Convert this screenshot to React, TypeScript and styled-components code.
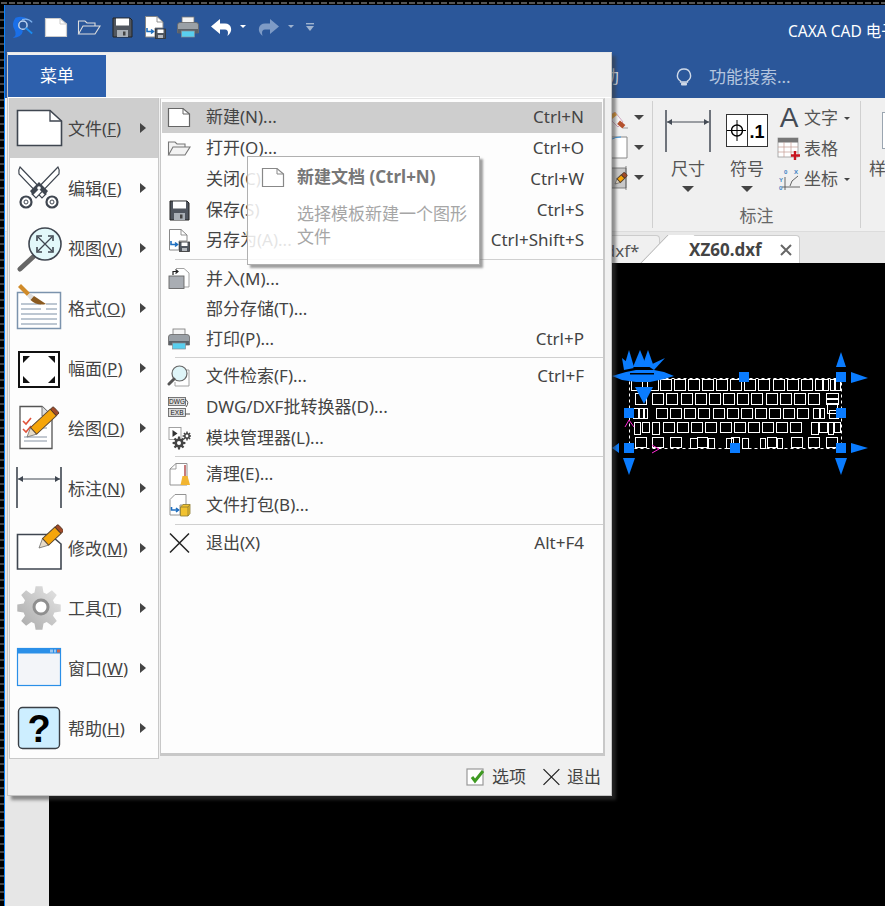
import React from 'react'
import styled, { createGlobalStyle } from 'styled-components'

const FONT = '"Noto Sans", "Noto Sans CJK SC", sans-serif'

const GlobalStyle = createGlobalStyle`
  html, body { margin: 0; padding: 0; background: #000; }
  * { box-sizing: border-box; }
`

const Root = styled.div`
  position: relative;
  width: 885px;
  height: 906px;
  overflow: hidden;
  background: #000;
  font-family: ${FONT};
  font-size: 17px;
  line-height: 20px;
  color: #444;
  display: flex;
  flex-direction: column;
`
const TopEdge = styled.div`
  height: 5px;
  flex: none;
  background:
    repeating-linear-gradient(90deg, #000 0 1px, #555 1px 7px, #000 7px 8px) 0 2px / 100% 2px no-repeat,
    #000;
`
const Frame = styled.div`
  flex: 1;
  display: flex;
  min-height: 0;
`
const LeftEdge = styled.div`
  width: 5px;
  flex: none;
  border-right: 1px solid #0a84ff;
  background: repeating-linear-gradient(180deg, #000 0 6px, #444 6px 8px);
`
const Main = styled.div`
  flex: 1;
  min-width: 0;
  display: flex;
  flex-direction: column;
`
const TitleBar = styled.div`
  height: 47px;
  flex: none;
  display: flex;
  align-items: center;
  background: #2b579a;
  padding-left: 5px;
`
const QuickBar = styled.div`
  display: flex;
  align-items: center;
  width: 778px;
  flex: none;
  margin-bottom: 4px;
`
const QuickButton = styled.div<{ $w: number; $gap?: number }>`
  width: ${p => p.$w}px;
  margin-left: ${p => p.$gap ?? 0}px;
  height: 26px;
  flex: none;
  display: flex;
  align-items: center;
  justify-content: center;
`
const Title = styled.div`
  color: #fff;
  white-space: nowrap;
  font-size: 15.5px;
  margin-top: 4px;
`
const TabBar = styled.div`
  height: 46px;
  flex: none;
  display: flex;
  align-items: center;
  background: #2b579a;
  padding: 4px 0 0 566px;
  color: #dfe7f2;
`
const RibbonTab = styled.div`
  width: 62px;
  text-align: center;
  margin-right: 41px;
`
const SearchHint = styled.div`
  display: flex;
  align-items: center;
  gap: 15px;
  color: #b4c5de;
`
const Ribbon = styled.div`
  height: 134px;
  flex: none;
  display: flex;
  padding: 3px 0 3px 590px;
  background: #f0f0f0;
  border-bottom: 1px solid #dcdcdc;
`
const RibbonGroup = styled.div<{ $w: number }>`
  width: ${p => p.$w}px;
  flex: none;
  display: flex;
  flex-direction: column;
  border-right: 1px solid #d0d0d0;
`
const GroupBody = styled.div`
  flex: 1;
  display: flex;
`
const StyleBody = styled(GroupBody)`
  padding: 11px 0 0 17px;
`
const GroupLabel = styled.div`
  height: 24px;
  text-align: center;
  color: #666;
  line-height: 24px;
`
const LargeButton = styled.div<{ $w: number }>`
  width: ${p => p.$w}px;
  flex: none;
  display: flex;
  flex-direction: column;
  align-items: center;
  color: #555;
`
const LargeIcon = styled.div`
  height: 52px;
  margin-top: 5px;
  padding-bottom: 3px;
  display: flex;
  align-items: center;
  justify-content: center;
`
const LargeLabel = styled.div`
  line-height: 22px;
`
const CaretDown = styled.span<{ $size: number }>`
  display: inline-block;
  width: 0;
  height: 0;
  border-left: ${p => p.$size}px solid transparent;
  border-right: ${p => p.$size}px solid transparent;
  border-top: ${p => p.$size}px solid ${p => p.color || '#444'};
`
const LargeCaret = styled(CaretDown)`
  margin-top: 6px;
`
const SmallColumn = styled.div`
  display: flex;
  flex-direction: column;
  padding: 2px 0 0 6px;
`
const SmallRow = styled.div`
  height: 30.5px;
  display: flex;
  align-items: center;
  gap: 2px;
  color: #555;
`
const SmallIcon = styled.div`
  width: 24px;
  height: 24px;
  flex: none;
`
const SmallText = styled.span`
  width: 38px;
  margin-left: 1px;
`
const DocTabs = styled.div`
  height: 31px;
  flex: none;
  display: flex;
  align-items: flex-end;
  background: #e8e8e8;
  padding-left: 555px;
`
const DocTab = styled.div`
  width: 100px;
  height: 28px;
  flex: none;
  background: #f0f0f0;
  border: 1px solid #ccc;
  border-bottom: none;
  border-radius: 0 4px 0 0;
  line-height: 30px;
  text-align: right;
  padding-right: 23px;
  color: #555;
  overflow: hidden;
  white-space: nowrap;
`
const ActiveTab = styled.div`
  position: relative;
  width: 133px;
  height: 28px;
  flex: none;
  margin-left: 7px;
  background: #fff;
  border-top: 1px solid #ccc;
  border-right: 1px solid #ccc;
  border-radius: 0 4px 0 0;
  display: flex;
  align-items: center;
  padding-left: 22px;
  gap: 18px;
  font-weight: 700;
  color: #444;
  &::before {
    content: '';
    position: absolute;
    left: -13px;
    top: -1px;
    width: 26px;
    height: 28px;
    background: #fff;
    border-left: 1px solid #aaa;
    transform: skewX(-44deg);
  }
`
const TabName = styled.span`
  position: relative;
`
const Workspace = styled.div`
  flex: 1;
  min-height: 0;
  display: flex;
`
const Rail = styled.div`
  width: 44px;
  flex: none;
  background: #e6e6e6;
`
const Canvas = styled.svg`
  flex: 1;
  min-width: 0;
  height: 100%;
  display: block;
  background: #000;
`

/* file menu overlay */
const Menu = styled.div`
  position: absolute;
  left: 7px;
  top: 52px;
  width: 605px;
  height: 744px;
  display: flex;
  flex-direction: column;
  background: #f0f0f0;
  border: 1px solid #c4c4c4;
  border-top-color: #e8e8e8;
  box-shadow: 4px 4px 3px rgba(60, 60, 60, 0.55);
`
const MenuHead = styled.div`
  height: 44px;
  flex: none;
  padding-top: 2px;
`
const MenuTab = styled.div`
  width: 98px;
  height: 42px;
  background: #2d60ad;
  color: #fff;
  display: flex;
  align-items: center;
  justify-content: center;
`
const MenuBody = styled.div`
  height: 662px;
  flex: none;
  display: flex;
  align-items: flex-start;
  border-top: 1px solid #fff;
  padding-left: 1px;
`
const NavPanel = styled.div`
  width: 150px;
  height: 661px;
  flex: none;
  background: #fdfdfd;
  border: 1px solid #c8c8c8;
  border-top: none;
`
const NavItem = styled.div<{ $active?: boolean }>`
  height: 60px;
  display: flex;
  align-items: center;
  padding-left: 5px;
  background: ${p => (p.$active ? '#cecece' : 'transparent')};
`
const NavIcon = styled.div`
  width: 48px;
  height: 48px;
  flex: none;
`
const NavText = styled.div`
  width: 72px;
  margin-left: 5px;
  padding-top: 2px;
  white-space: nowrap;
`
const Accel = styled.span`
  text-decoration: underline;
`
const NavArrow = styled.div`
  width: 0;
  height: 0;
  border-top: 5px solid transparent;
  border-bottom: 5px solid transparent;
  border-left: 6px solid #444;
`
const ListPanel = styled.div`
  width: 445px;
  height: 658px;
  flex: none;
  margin-left: 1px;
  background: #fdfdfd;
  border: 1px solid #c8c8c8;
  border-top: 1px solid #e4e4e4;
  border-right-width: 2px;
  border-bottom-width: 3px;
  padding: 3px 0 0 1px;
`
const ListRow = styled.div<{ $h: number; $active?: boolean }>`
  height: ${p => p.$h}px;
  display: flex;
  align-items: center;
  padding: 0 18px 0 5px;
  margin-right: 1px;
  background: ${p => (p.$active ? '#cecece' : 'transparent')};
  white-space: nowrap;
`
const ListIcon = styled.div`
  width: 24px;
  height: 24px;
  flex: none;
  margin-right: 15px;
`
const ListLabel = styled.div`
  flex: 1;
`
const Rule = styled.div<{ $gap: number }>`
  height: 1px;
  margin: ${p => p.$gap}px 0 ${p => p.$gap}px 13px;
  background: #d0d0d0;
`
const MenuFoot = styled.div`
  flex: 1;
  display: flex;
  align-items: center;
  justify-content: flex-end;
  padding-right: 10px;
  gap: 15px;
`
const FootButton = styled.div`
  display: flex;
  align-items: center;
  gap: 6px;
`
const Tip = styled.div`
  position: absolute;
  left: 239px;
  top: 103px;
  width: 233px;
  height: 109px;
  padding: 8px 10px 0 13px;
  background: rgba(255, 255, 255, 0.86);
  border: 1px solid #b0b0b0;
  box-shadow: 3px 3px 2px rgba(120, 120, 120, 0.7);
`
const TipHead = styled.div`
  display: flex;
  align-items: center;
  gap: 12px;
  font-weight: 700;
  color: #777;
`
const TipBody = styled.div`
  margin: 13px 0 0 36px;
  color: #a6a6a6;
  line-height: 23px;
`

/* drawings */
const Svg: React.FC<{ s?: number; w?: number; h?: number; box?: string; children: React.ReactNode }> = ({ s = 24, w, h, box, children }) => (
  <svg width={w ?? s} height={h ?? s} viewBox={box ?? `0 0 ${w ?? s} ${h ?? s}`} style={{ display: 'block' }}>{children}</svg>
)

const gearPath = (cx: number, cy: number, ro: number, ri: number, teeth: number) => {
  const pts: string[] = []
  const step = (Math.PI * 2) / teeth
  for (let i = 0; i < teeth; i++) {
    const a = i * step
    const offs: [number, number][] = [[-0.36, ri], [-0.2, ro], [0.2, ro], [0.36, ri]]
    offs.forEach(([o, r]) => {
      pts.push(`${(cx + Math.cos(a + o * step) * r).toFixed(1)},${(cy + Math.sin(a + o * step) * r).toFixed(1)}`)
    })
  }
  return pts.join(' ')
}

const Pencil: React.FC<{ x: number; y: number; len?: number; wd?: number }> = ({ x, y, len = 32, wd = 7 }) => (
  <g transform={`translate(${x} ${y}) rotate(-43)`}>
    <polygon points={`0,0 ${wd},${-wd / 2} ${wd},${wd / 2}`} fill="#e8dcc8" stroke="#666" strokeWidth="0.7" />
    <rect x={wd} y={-wd / 2} width={len - wd - 4} height={wd} fill="#f5a50a" stroke="#5a4632" strokeWidth="1" />
    <rect x={len - 4} y={-wd / 2} width="4" height={wd} rx="1.5" fill="#a04a28" stroke="#4a3020" strokeWidth="0.8" />
  </g>
)

const PageNew: React.FC<{ stroke?: string; fill?: string }> = ({ stroke = '#666', fill = '#fff' }) => (
  <Svg>
    <path d="M1.5 3.500H16L22.500 9V21.500H1.500Z" fill={fill} stroke={stroke} strokeWidth="1.2" />
    <path d="M16 3.500V9H22.500" fill="none" stroke={stroke} strokeWidth="1" />
  </Svg>
)
const FolderOpen: React.FC<{ stroke?: string; fill?: string }> = ({ stroke = '#777', fill = '#f3f3f3' }) => (
  <Svg>
    <path d="M1.5 19V6H8L10 8H18V11" fill={fill} stroke={stroke} strokeWidth="1.1" />
    <path d="M1.5 19L6 11H23L18 19Z" fill={fill} stroke={stroke} strokeWidth="1.1" />
  </Svg>
)
const Floppy: React.FC = () => (
  <Svg>
    <path d="M3 3H20L22 5V22H3Z" fill="#50565f" stroke="#222" strokeWidth="1" />
    <rect x="6" y="3.5" width="13" height="7" fill="#fff" />
    <rect x="7" y="15" width="11" height="7" fill="#aab0b7" />
    <rect x="13" y="16.5" width="2.5" height="4" fill="#444" />
  </Svg>
)
const SaveAs: React.FC = () => (
  <Svg>
    <path d="M2.5 1.5H14L20 7V13H12V22H2.5Z" fill="#fff" stroke="#888" strokeWidth="1" />
    <path d="M14 1.5V7H20" fill="none" stroke="#888" strokeWidth="0.9" />
    <path d="M4 13V16.5H10M8 14.5L10.5 16.5L8 18.5" fill="none" stroke="#1f6fc0" strokeWidth="1.6" />
    <rect x="12.5" y="14" width="10" height="9.5" fill="#50565f" stroke="#333" strokeWidth="0.8" />
    <rect x="14.5" y="14.5" width="6" height="3.5" fill="#fff" />
    <rect x="15" y="20" width="5" height="3" fill="#b5b9be" />
  </Svg>
)
const Printer: React.FC = () => (
  <Svg>
    <rect x="6" y="2" width="12" height="7" fill="#f4f4f4" stroke="#777" strokeWidth="0.8" />
    <path d="M1.5 10Q1.5 7.5 4 7.5H20Q22.5 7.5 22.5 10V18H1.5Z" fill="#9aa0a6" stroke="#666" strokeWidth="0.8" />
    <rect x="2" y="14" width="20" height="4" fill="#5b6168" />
    <rect x="5.5" y="16" width="13" height="6" fill="#59cfef" stroke="#8a8f95" strokeWidth="0.7" />
  </Svg>
)
const Merge: React.FC = () => (
  <Svg>
    <path d="M9 1.5H17L22 6V20H17" fill="#fff" stroke="#999" strokeWidth="0.9" />
    <rect x="2" y="9" width="15" height="12.5" fill="#a9adb3" stroke="#666" strokeWidth="0.9" />
    <path d="M6 8V4.5H10M8.5 2.5L11 4.5L8.5 6.5" fill="none" stroke="#222" strokeWidth="1.2" />
  </Svg>
)
const FindFile: React.FC = () => (
  <Svg>
    <path d="M12 6H22V22H8V18" fill="#fff" stroke="#999" strokeWidth="0.9" />
    <circle cx="12.5" cy="9.5" r="7.5" fill="#dff5f8" stroke="#666" strokeWidth="1.2" />
    <line x1="7" y1="15" x2="2" y2="20" stroke="#555" strokeWidth="3" strokeLinecap="round" />
  </Svg>
)
const Converter: React.FC = () => (
  <Svg>
    <rect x="1.5" y="2.5" width="17" height="8" fill="#ddd" stroke="#444" strokeWidth="0.7" />
    <rect x="1.5" y="13.5" width="17" height="8" fill="#ddd" stroke="#444" strokeWidth="0.7" />
    <text x="10" y="9" textAnchor="middle" fontSize="6.5" fontFamily="Liberation Sans" fill="#222">DWG</text>
    <text x="10" y="20" textAnchor="middle" fontSize="6.5" fontFamily="Liberation Sans" fill="#222">EXB</text>
    <path d="M18 4Q23 7 19 12M18 19H23" fill="none" stroke="#555" strokeWidth="1" />
  </Svg>
)
const Modules: React.FC = () => (
  <Svg>
    <rect x="2" y="1.5" width="12" height="12" fill="#fff" stroke="#999" strokeWidth="0.9" />
    <polygon points="5.5,4 10.5,7.5 5.5,11" fill="#333" />
    <polygon points={gearPath(12, 17, 6.5, 4.5, 8)} fill="#444" />
    <circle cx="12" cy="17" r="2" fill="#fff" />
    <polygon points={gearPath(20, 10, 4.5, 3, 8)} fill="#444" />
    <circle cx="20" cy="10" r="1.4" fill="#fff" />
  </Svg>
)
const Clean: React.FC = () => (
  <Svg>
    <path d="M3 7L9 1.5H20V23H3Z" fill="#fff" stroke="#888" strokeWidth="0.9" />
    <path d="M3 7H9V1.5" fill="none" stroke="#888" strokeWidth="0.8" />
    <line x1="18" y1="3" x2="18" y2="14" stroke="#a33" strokeWidth="1.3" />
    <path d="M15.5 14H20.5L23 23H13.5Z" fill="#f2b531" />
  </Svg>
)
const Pack: React.FC = () => (
  <Svg>
    <path d="M3 6.5L8 1.5H19V12H13V22H3Z" fill="#fff" stroke="#888" strokeWidth="0.9" />
    <path d="M4.5 14V17H11M9 15L11.5 17L9 19" fill="none" stroke="#1f6fc0" strokeWidth="1.6" />
    <path d="M13.5 14L16 11.5H23V20.5L21 23H13.5Z" fill="#f2c230" stroke="#8a7a30" strokeWidth="0.8" />
    <path d="M13.5 14H21V23M21 14L23 11.5" fill="none" stroke="#8a7a30" strokeWidth="0.8" />
  </Svg>
)
const Cross: React.FC<{ s?: number }> = ({ s = 24 }) => (
  <Svg s={s} box="0 0 24 24">
    <path d="M3 2.5L22 21.5M22 2.5L3 21.5" stroke="#222" strokeWidth="1.5" fill="none" />
  </Svg>
)

const NavFile = () => (
  <Svg s={48}>
    <path d="M2.5 6.5H35L46.5 17V41.5H2.5Z" fill="#fff" stroke="#3f4650" strokeWidth="1.6" />
    <path d="M35 6.5V17H46.5" fill="none" stroke="#3f4650" strokeWidth="1.3" />
  </Svg>
)
const NavCut = () => (
  <Svg s={48}>
    <path d="M5 3L31 30L27 34L4 10Q3 6 5 3Z" fill="#fff" stroke="#3f4650" strokeWidth="1.2" />
    <path d="M43 3L17 30L21 34L44 10Q45 6 43 3Z" fill="#fff" stroke="#3f4650" strokeWidth="1.2" />
    <path d="M15 27L24 18L33 27L30 31L24 25L18 31Z" fill="#3f4650" />
    <circle cx="11" cy="38" r="5.5" fill="#fff" stroke="#3f4650" strokeWidth="2.2" />
    <circle cx="37" cy="38" r="5.5" fill="#fff" stroke="#3f4650" strokeWidth="2.2" />
    <circle cx="11" cy="38" r="2" fill="none" stroke="#3f4650" />
    <circle cx="37" cy="38" r="2" fill="none" stroke="#3f4650" />
    <circle cx="24" cy="24" r="1.8" fill="#fff" />
  </Svg>
)
const NavView = () => (
  <Svg s={48}>
    <line x1="18" y1="33" x2="5" y2="45" stroke="#666" strokeWidth="5" strokeLinecap="round" />
    <circle cx="30" cy="20" r="16" fill="#e2f8fa" stroke="#3f4650" strokeWidth="1.6" />
    <path d="M23 13L37 27M37 13L23 27" stroke="#3f4650" strokeWidth="1.3" />
    <path d="M22 17V12H27M33 12H38V17M38 23V28H33M27 28H22V23" fill="none" stroke="#3f4650" strokeWidth="1.6" />
  </Svg>
)
const NavFormat = () => (
  <Svg s={48}>
    <rect x="2.5" y="8.5" width="43" height="36" fill="#fff" stroke="#7b93ad" strokeWidth="1.5" />
    <path d="M6 20H26M31 20H42M6 25H26M31 25H42M6 30H42M6 35H42M6 40H42" stroke="#a8b5c3" strokeWidth="1.3" />
    <path d="M3 3L6 0L15 9L12 12Z" fill="#d08b2a" />
    <path d="M12 12L15 9L19 12L15.5 16Z" fill="#ddd" />
    <path d="M15.5 16L19 12Q25 16 31 20Q22 22 15.5 16Z" fill="#8a5a20" />
  </Svg>
)
const NavPaper = () => (
  <Svg s={48}>
    <rect x="4" y="8" width="40" height="35" fill="#fff" stroke="#111" strokeWidth="2" />
    <polygon points="8,12 15,12 8,19" fill="#111" />
    <polygon points="40,12 33,12 40,19" fill="#111" />
    <polygon points="8,39 15,39 8,32" fill="#111" />
    <polygon points="40,39 33,39 40,32" fill="#111" />
  </Svg>
)
const NavDraw = () => (
  <Svg s={48}>
    <path d="M5 2.5H27L37 12V44.5H5Z" fill="#fff" stroke="#555" strokeWidth="1.3" />
    <path d="M27 2.5V12H37" fill="#ddd" stroke="#777" />
    <path d="M8 17L11 20L16 14M8 25L11 28L16 22" fill="none" stroke="#e0533a" strokeWidth="1.6" />
    <path d="M19 24H32M9 33H32M9 37H32" stroke="#b0b8c2" strokeWidth="1.3" />
    <Pencil x={12} y={33} len={40} wd={9} />
  </Svg>
)
const NavDim = () => (
  <Svg s={48}>
    <path d="M2 3V44M46 3V44" stroke="#3f4650" strokeWidth="1.6" />
    <path d="M3 15H45" stroke="#3f4650" strokeWidth="1.2" />
    <polygon points="3,15 8,12 8,18" fill="#3f4650" />
    <polygon points="45,15 40,12 40,18" fill="#3f4650" />
  </Svg>
)
const NavEdit = () => (
  <Svg s={48}>
    <path d="M2.5 10.5H35L46 20V45H2.5Z" fill="#fff" stroke="#3f4650" strokeWidth="1.6" />
    <Pencil x={24} y={24} len={30} wd={9} />
  </Svg>
)
const NavTool = () => (
  <Svg s={48}>
    <defs>
      <linearGradient id="gear" x1="1" y1="0" x2="0" y2="1">
        <stop offset="0" stopColor="#e6e6e6" />
        <stop offset="1" stopColor="#a8a8a8" />
      </linearGradient>
    </defs>
    <polygon points={gearPath(24, 24, 22, 16, 8)} fill="url(#gear)" />
    <circle cx="26" cy="23" r="7" fill="#fff" stroke="#8f8f8f" strokeWidth="3" />
  </Svg>
)
const NavWindow = () => (
  <Svg s={48}>
    <rect x="2.5" y="4.5" width="43" height="37" fill="#f3f5f9" stroke="#2a8fe8" strokeWidth="1.2" />
    <rect x="2.5" y="4.5" width="43" height="5" fill="#2a8fe8" />
    <rect x="35" y="5.5" width="3" height="3" fill="#9cc6ee" />
    <rect x="39" y="5.5" width="2" height="3" fill="#9cc6ee" />
    <rect x="42" y="5.5" width="3" height="3" fill="#d0664a" />
  </Svg>
)
const NavHelp = () => (
  <Svg s={48}>
    <rect x="3.5" y="3.5" width="41" height="41" rx="4" fill="#cdeeff" stroke="#3a3f45" strokeWidth="1.4" />
    <text x="24" y="38" textAnchor="middle" fontSize="38" fontWeight="700" fontFamily="Liberation Sans" fill="#000">?</text>
  </Svg>
)

const navItems: { label: string; key: string; icon: React.ReactNode }[] = [
  { label: '文件', key: 'F', icon: <NavFile /> },
  { label: '编辑', key: 'E', icon: <NavCut /> },
  { label: '视图', key: 'V', icon: <NavView /> },
  { label: '格式', key: 'O', icon: <NavFormat /> },
  { label: '幅面', key: 'P', icon: <NavPaper /> },
  { label: '绘图', key: 'D', icon: <NavDraw /> },
  { label: '标注', key: 'N', icon: <NavDim /> },
  { label: '修改', key: 'M', icon: <NavEdit /> },
  { label: '工具', key: 'T', icon: <NavTool /> },
  { label: '窗口', key: 'W', icon: <NavWindow /> },
  { label: '帮助', key: 'H', icon: <NavHelp /> },
]

type Entry = { label: string; short?: string; icon?: React.ReactNode }
const sections: { h: number; gap: number; items: Entry[] }[] = [
  {
    h: 30.75, gap: 3.6, items: [
      { label: '新建(N)...', short: 'Ctrl+N', icon: <PageNew /> },
      { label: '打开(O)...', short: 'Ctrl+O', icon: <FolderOpen /> },
      { label: '关闭(C)', short: 'Ctrl+W' },
      { label: '保存(S)', short: 'Ctrl+S', icon: <Floppy /> },
      { label: '另存为(A)...', short: 'Ctrl+Shift+S', icon: <SaveAs /> },
    ],
  },
  {
    h: 30, gap: 2.6, items: [
      { label: '并入(M)...', icon: <Merge /> },
      { label: '部分存储(T)...' },
      { label: '打印(P)...', short: 'Ctrl+P', icon: <Printer /> },
    ],
  },
  {
    h: 31, gap: 2.4, items: [
      { label: '文件检索(F)...', short: 'Ctrl+F', icon: <FindFile /> },
      { label: 'DWG/DXF批转换器(D)...', icon: <Converter /> },
      { label: '模块管理器(L)...', icon: <Modules /> },
    ],
  },
  {
    h: 31, gap: 2.6, items: [
      { label: '清理(E)...', icon: <Clean /> },
      { label: '文件打包(B)...', icon: <Pack /> },
    ],
  },
  { h: 31, gap: 0, items: [{ label: '退出(X)', short: 'Alt+F4', icon: <Cross /> }] },
]

/* the selected drawing on the black canvas, page coordinates */
const BLUE = '#0a7cff'
const cells: [number, number, number[]][] = [
  [379, 11, [631, 647, 660, 674, 688, 702, 716, 730, 744, 758, 773, 787, 801]],
  [393, 11, [635, 652, 666, 681, 695, 709, 723, 737, 751, 766, 780, 794, 808]],
  [408, 10, [656, 670, 684, 698, 713, 727, 741, 755, 769, 783, 797]],
  [422, 10, [663, 677, 691, 705, 720, 734, 748, 762, 776, 790]],
  [437, 10, [635, 652, 670, 791, 808, 826]],
]
const slats: [number, number, number, number][] = [
  [815, 379, 7, 11], [823, 379, 5, 11], [830, 379, 4, 11], [835, 379, 5, 11],
  [826, 393, 12, 5], [826, 399, 12, 5], [827, 403, 10, 10], [829, 410, 9, 8],
  [633, 408, 5, 10], [639, 408, 4, 10], [644, 408, 3, 10],
  [813, 408, 6, 10], [820, 408, 4, 10],
  [634, 422, 6, 12], [642, 422, 7, 10], [652, 422, 7, 12],
  [811, 422, 7, 12], [819, 422, 8, 10], [828, 422, 5, 12], [834, 422, 6, 10],
  [690, 438, 7, 10], [697, 437, 10, 10], [708, 438, 6, 10],
  [726, 438, 7, 10], [731, 437, 8, 10], [742, 438, 6, 10],
  [760, 438, 5, 10], [767, 437, 9, 10], [777, 438, 5, 10],
]
const handles: [number, number][] = [[744, 377], [841, 377], [629, 413], [841, 413], [629, 448], [735, 448], [841, 448]]
const arrows: string[] = [
  '841,352 846,367 836,367', '851,372 868,378 851,383', '851,443 868,448 851,453',
  '835,458 847,458 841,475', '623,458 635,458 629,475', '619,443 612,448 619,453',
  '629,350 634,367 624,367', '640,350 647,367 633,367', '648,350 654,367 642,367',
  '622,358 634,368 624,370', '665,358 654,370 648,366',
  '635,387 653,387 644,404',
]

const Drawing = () => (
  <Canvas viewBox="49 263 836 643" preserveAspectRatio="xMinYMin slice">
    {cells.map(([y, h, xs]) =>
      xs.map(x => <rect key={`${x}-${y}`} x={x + 0.5} y={y + 0.5} width={11} height={h} fill="none" stroke="#fff" strokeWidth="1" />),
    )}
    {slats.map(([x, y, w, h]) => (
      <rect key={`${x}-${y}-${w}`} x={x + 0.5} y={y + 0.5} width={w} height={h} fill="none" stroke="#fff" strokeWidth="1" />
    ))}
    <rect x="629.5" y="378.5" width="212" height="70" fill="none" stroke="#fff" strokeDasharray="3 3" />
    <path d="M625 427L629 420L634 427M652 445L659 449L652 453" fill="none" stroke="#ff2bd6" strokeWidth="1" />
    <polygon points="612,376 626,372 636,370 654,370 664,372 674,376 664,379 650,382 636,382 622,380" fill={BLUE} />
    <rect x="630" y="373" width="24" height="1.5" fill="#000" />
    {arrows.map(p => <polygon key={p} points={p} fill={BLUE} />)}
    {handles.map(([x, y]) => <rect key={`${x}-${y}`} x={x - 5} y={y - 5} width="10" height="10" fill={BLUE} />)}
  </Canvas>
)

const Logo = () => (
  <Svg s={24} box="0 0 26 26">
    <path d="M6 3Q1 10 5 16Q8 22 3 25Q13 24 14 17Q7 14 9 8Q12 3 20 5Q14 0 6 3Z" fill="#1a6fe8" />
    <circle cx="14" cy="11" r="4.5" fill="none" stroke="#bcd4f2" strokeWidth="1.6" />
    <line x1="17" y1="14" x2="24" y2="20" stroke="#1a8cf0" strokeWidth="2" />
    <path d="M13 5Q20 3 24 8" fill="none" stroke="#7fb2ee" strokeWidth="1.4" />
  </Svg>
)
const Undo: React.FC<{ color: string }> = ({ color }) => (
  <Svg>
    <path d="M11 4L2 11.5L11 19V14.5H16Q19 14.5 19 18L18.5 21Q23 17 22 13Q21 8.5 16 8.5H11Z" fill={color} />
  </Svg>
)
const Redo: React.FC<{ color: string }> = ({ color }) => (
  <Svg>
    <path d="M13 4L22 11.5L13 19V14.5H8Q5 14.5 5 18L5.5 21Q1 17 2 13Q3 8.5 8 8.5H13Z" fill={color} />
  </Svg>
)
const Overflow = () => (
  <Svg s={10}>
    <rect x="1" y="1" width="8" height="1.4" fill="#9fb3cf" />
    <polygon points="1,4 9,4 5,9" fill="#9fb3cf" />
  </Svg>
)
const Bulb = () => (
  <Svg s={20}>
    <path d="M10 2A6.5 6.5 0 0 0 6.5 14V15H13.5V14A6.5 6.5 0 0 0 10 2Z" fill="none" stroke="#cfd9e8" strokeWidth="1.4" />
    <rect x="7" y="15.5" width="6" height="3" rx="1" fill="#cfd9e8" />
  </Svg>
)
const DimLarge = () => (
  <Svg w={46} h={42}>
    <path d="M1 0V42M45 0V42" stroke="#444b55" strokeWidth="1.5" />
    <path d="M2 12H44" stroke="#444b55" strokeWidth="1.2" />
    <polygon points="2,12 7,9 7,15" fill="#444b55" />
    <polygon points="44,12 39,9 39,15" fill="#444b55" />
  </Svg>
)
const SymbolLarge = () => (
  <Svg w={42} h={33}>
    <rect x="0.5" y="0.5" width="41" height="32" fill="#fff" stroke="#333" strokeWidth="1" />
    <line x1="21.5" y1="0" x2="21.5" y2="33" stroke="#333" />
    <circle cx="11" cy="16.500" r="5.5" fill="none" stroke="#000" strokeWidth="1.4" />
    <path d="M1 16.500H20M11 6V27" stroke="#000" strokeWidth="1" />
    <text x="31" y="24" textAnchor="middle" fontSize="18" fontWeight="700" fontFamily="Liberation Sans" fill="#000">.1</text>
  </Svg>
)
const GlyphA = styled.div`
  width: 24px;
  height: 24px;
  font-size: 28px;
  line-height: 24px;
  text-align: center;
  color: #444b55;
  font-family: "Liberation Sans", sans-serif;
`
const TableIcon = () => (
  <Svg>
    <rect x="1" y="1" width="20" height="19" fill="#fff" stroke="#999" strokeWidth="0.8" />
    <rect x="1" y="1" width="20" height="4.5" fill="#777" />
    <path d="M1 10H21M1 15H21M7 5V20M14 5V20" stroke="#c49b94" strokeWidth="0.7" />
    <path d="M18 14V23M14 18.500H23" stroke="#c8141e" strokeWidth="2.4" />
  </Svg>
)
const CoordIcon = () => (
  <Svg>
    <path d="M5 20H23M8 23V10M13 19L15 14L21 9" fill="none" stroke="#555" strokeWidth="0.9" />
    <text x="2" y="15" fontSize="6" fontWeight="700" fontFamily="Liberation Sans" fill="#3a82c4">Y</text>
    <text x="2" y="23" fontSize="6" fontWeight="700" fontFamily="Liberation Sans" fill="#3a82c4">0</text>
    <text x="7" y="7" fontSize="6" fontWeight="700" fontFamily="Liberation Sans" fill="#3a82c4">0</text>
    <text x="17" y="7" fontSize="6" fontWeight="700" fontFamily="Liberation Sans" fill="#3a82c4">X</text>
  </Svg>
)
const StyleColumn = () => (
  <Svg w={34} h={80}>
    <path d="M0 2L3 0L11 10L6 15L0 9Z" fill="#fafafa" stroke="#a58" strokeWidth="0.5" />
    <path d="M0 2L3 0L5 3L0 7Z" fill="#f0a030" />
    <rect x="6" y="10" width="7" height="4.500" transform="rotate(40 9 12)" fill="#b5512d" />
    <path d="M11 16H16" stroke="#999" />
    <polygon points="22,3 32,3 27,8" fill="#444" />
    <path d="M0 25H15V46H0" fill="#fff" stroke="#888" strokeWidth="1" />
    <path d="M0 27Q3 25 9 25" fill="none" stroke="#3a9ae8" strokeWidth="1" />
    <polygon points="22,33 32,33 27,38" fill="#444" />
    <rect x="0" y="56" width="14" height="20" fill="#c8c8c8" />
    <path d="M0 56H14V76H0M14 54V78" fill="none" stroke="#666" strokeWidth="0.8" />
    <Pencil x={3} y={72} len={15} wd={5} />
    <polygon points="22,63 32,63 27,68" fill="#444" />
  </Svg>
)
const NextGroupIcon = () => (
  <Svg w={32} h={38}>
    <rect x="20.500" y="0.500" width="16" height="36" fill="#fff" stroke="#9aa5b0" />
  </Svg>
)
const CheckBox = () => (
  <Svg s={20}>
    <rect x="1" y="2" width="16" height="16" fill="#fff" stroke="#999" strokeWidth="1.2" />
    <path d="M6 10L9 14L17 4" fill="none" stroke="#3f9a22" strokeWidth="3" />
  </Svg>
)

export default function App() {
  return (
    <>
      <GlobalStyle />
      <Root>
        <TopEdge />
        <Frame>
          <LeftEdge />
          <Main>
            <TitleBar>
              <QuickBar>
                <QuickButton $w={24}><Logo /></QuickButton>
                <QuickButton $w={33} $gap={5.5}><PageNew stroke="#ccc" /></QuickButton>
                <QuickButton $w={33}><FolderOpen stroke="#ddd" fill="#2b579a" /></QuickButton>
                <QuickButton $w={33}><Floppy /></QuickButton>
                <QuickButton $w={33}><SaveAs /></QuickButton>
                <QuickButton $w={33}><Printer /></QuickButton>
                <QuickButton $w={33}><Undo color="#fff" /></QuickButton>
                <QuickButton $w={11}><CaretDown $size={3} color="#fff" /></QuickButton>
                <QuickButton $w={33} $gap={4}><Redo color="#7e9bc6" /></QuickButton>
                <QuickButton $w={11}><CaretDown $size={3} color="#9fb3cf" /></QuickButton>
                <QuickButton $w={11} $gap={8}><Overflow /></QuickButton>
              </QuickBar>
              <Title>CAXA CAD 电子图板</Title>
            </TitleBar>
            <TabBar>
              <RibbonTab>帮助</RibbonTab>
              <SearchHint><Bulb />功能搜索...</SearchHint>
            </TabBar>
            <Ribbon>
              <RibbonGroup $w={58}>
                <StyleBody>
                  <StyleColumn />
                </StyleBody>
              </RibbonGroup>
              <RibbonGroup $w={208}>
                <GroupBody>
                  <LargeButton $w={70}>
                    <LargeIcon><DimLarge /></LargeIcon>
                    <LargeLabel>尺寸</LargeLabel>
                    <LargeCaret $size={6} />
                  </LargeButton>
                  <LargeButton $w={48}>
                    <LargeIcon><SymbolLarge /></LargeIcon>
                    <LargeLabel>符号</LargeLabel>
                    <LargeCaret $size={6} />
                  </LargeButton>
                  <SmallColumn>
                    <SmallRow><SmallIcon><GlyphA>A</GlyphA></SmallIcon><SmallText>文字</SmallText><CaretDown $size={3.5} /></SmallRow>
                    <SmallRow><SmallIcon><TableIcon /></SmallIcon><SmallText>表格</SmallText></SmallRow>
                    <SmallRow><SmallIcon><CoordIcon /></SmallIcon><SmallText>坐标</SmallText><CaretDown $size={3.5} /></SmallRow>
                  </SmallColumn>
                </GroupBody>
                <GroupLabel>标注</GroupLabel>
              </RibbonGroup>
              <LargeButton $w={33}>
                <LargeIcon><NextGroupIcon /></LargeIcon>
                <LargeLabel>样</LargeLabel>
              </LargeButton>
            </Ribbon>
            <DocTabs>
              <DocTab>XZ59.dxf*</DocTab>
              <ActiveTab>
                <TabName>XZ60.dxf</TabName>
                <Svg s={12}><path d="M1 1L11 11M11 1L1 11" stroke="#666" strokeWidth="2" /></Svg>
              </ActiveTab>
            </DocTabs>
            <Workspace>
              <Rail />
              <Drawing />
            </Workspace>
          </Main>
        </Frame>

        <Menu>
          <MenuHead><MenuTab>菜单</MenuTab></MenuHead>
          <MenuBody>
            <NavPanel>
              {navItems.map((n, i) => (
                <NavItem key={n.key} $active={i === 0}>
                  <NavIcon>{n.icon}</NavIcon>
                  <NavText>{n.label}(<Accel>{n.key}</Accel>)</NavText>
                  <NavArrow />
                </NavItem>
              ))}
            </NavPanel>
            <ListPanel>
              {sections.map((sec, si) => (
                <React.Fragment key={si}>
                  {si > 0 && <Rule $gap={sections[si - 1].gap} />}
                  {sec.items.map((it, ii) => (
                    <ListRow key={it.label} $h={sec.h} $active={si === 0 && ii === 0}>
                      <ListIcon>{it.icon}</ListIcon>
                      <ListLabel>{it.label}</ListLabel>
                      {it.short && <span>{it.short}</span>}
                    </ListRow>
                  ))}
                </React.Fragment>
              ))}
            </ListPanel>
          </MenuBody>
          <MenuFoot>
            <FootButton><CheckBox />选项</FootButton>
            <FootButton><Cross s={20} />退出</FootButton>
          </MenuFoot>
          <Tip>
            <TipHead><PageNew stroke="#888" />新建文档 (Ctrl+N)</TipHead>
            <TipBody>选择模板新建一个图形文件</TipBody>
          </Tip>
        </Menu>
      </Root>
    </>
  )
}
